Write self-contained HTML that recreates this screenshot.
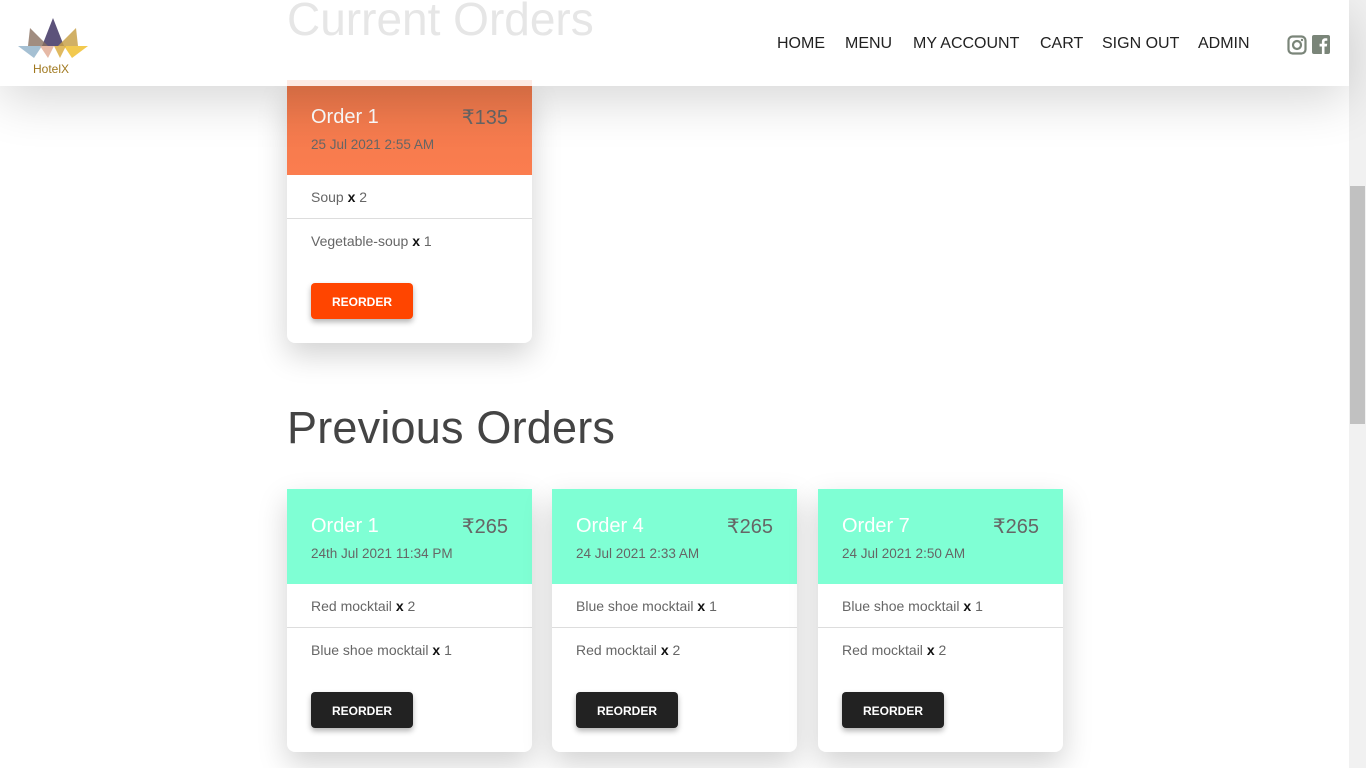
<!DOCTYPE html>
<html><head><meta charset="utf-8"><style>
*{box-sizing:border-box;margin:0;padding:0}
body{width:1366px;height:768px;overflow:hidden;background:#fff;font-family:"Liberation Sans",sans-serif;position:relative}
.hdr{position:absolute;left:0;top:0;width:1349px;height:86px;background:#fff;box-shadow:0 14px 50px rgba(0,0,0,.16);z-index:5}
.nav{position:absolute;top:35px;font-size:16px;color:#222}
.cur{position:absolute;left:287px;top:-8px;font-size:46px;font-weight:300;color:#e6e6e6;z-index:6}
.prev{position:absolute;left:287px;top:402px;font-size:45px;color:#444;font-weight:300;letter-spacing:.2px}
.card{position:absolute;width:245px;background:#fff;border-radius:0 0 8px 8px;box-shadow:0 12px 30px rgba(0,0,0,.18)}
.h{height:95px;padding:26px 24px 0;position:relative;color:#fff}
.h .t{font-size:20px}
.h .p{position:absolute;right:24px;top:25px;font-size:20px;color:#666}
.h .d{font-size:13.5px;color:#666;margin-top:8px}
.it{height:43px;padding:14px 24px;font-size:14px;color:#666}
.it b{color:#111;font-weight:bold}
.sep{border-top:1px solid #ddd}
.btn{position:absolute;left:24px;width:102px;height:36px;border-radius:4px;color:#fff;font-size:12px;font-weight:bold;text-align:center;line-height:38px;box-shadow:0 3px 6px rgba(0,0,0,.3)}
.sb{position:absolute;left:1349px;top:0;width:17px;height:768px;background:#f1f1f1}
.th{position:absolute;left:1350px;top:186px;width:15px;height:238px;background:#c1c1c1}
</style></head><body>
<div class="hdr">
<svg style="position:absolute;left:18px;top:16px" width="70" height="44" viewBox="0 0 70 44">
<polygon points="35,2 24,30 46,30" fill="#4a3f6b" opacity=".9"/>
<polygon points="12,12 10,30 30,30" fill="#8a7060" opacity=".8"/>
<polygon points="58,12 40,30 60,30" fill="#c9a24a" opacity=".85"/>
<polygon points="0,30 24,30 16,42" fill="#8fb0c8" opacity=".8"/>
<polygon points="46,30 70,30 54,42" fill="#f0c030" opacity=".85"/>
<polygon points="22,30 36,30 30,42" fill="#e0a890" opacity=".8"/>
<polygon points="36,30 48,30 42,42" fill="#d8a838" opacity=".8"/>
</svg>
<div style="position:absolute;left:33px;top:62px;font-size:12px;color:#a0781e">HotelX</div>
<div class="nav" style="left:777px">HOME</div>
<div class="nav" style="left:845px">MENU</div>
<div class="nav" style="left:913px">MY ACCOUNT</div>
<div class="nav" style="left:1040px">CART</div>
<div class="nav" style="left:1102px">SIGN OUT</div>
<div class="nav" style="left:1198px">ADMIN</div>
<svg style="position:absolute;left:1287px;top:35px" width="20" height="20" viewBox="0 0 20 20"><rect x="1.5" y="1.5" width="17" height="17" rx="4" fill="none" stroke="#7a8579" stroke-width="2.2"/><circle cx="10" cy="10" r="4" fill="none" stroke="#7a8579" stroke-width="2.2"/><circle cx="15" cy="5" r="1.2" fill="#7a8579"/></svg>
<svg style="position:absolute;left:1312px;top:35px" width="18" height="19" viewBox="0 0 18 19"><rect width="18" height="19" rx="2" fill="#7a8579"/><path d="M12.5 19V11.5h2.3l.4-2.7h-2.7V7.1c0-.8.3-1.3 1.4-1.3h1.4V3.4c-.3 0-1.1-.1-2-.1-2 0-3.4 1.2-3.4 3.5v2H7.6v2.7h2.3V19z" fill="#fff"/></svg>
</div>
<div class="cur">Current Orders</div>
<div style="position:absolute;left:287px;top:80px;width:245px;height:6px;background:#fdeae4;z-index:6"></div>
<div class="card" style="left:287px;top:86px;height:257px">
<div class="h" style="height:89px;padding-top:20px;background:linear-gradient(#ee794c,#fb7d4f)"><div class="t">Order 1</div><div class="p" style="top:19px">₹135</div><div class="d">25 Jul 2021 2:55 AM</div></div>
<div class="it">Soup <b>x</b> 2</div>
<div class="it sep">Vegetable-soup <b>x</b> 1</div>
<div class="btn" style="top:197px;background:#ff4500">REORDER</div>
</div>
<div class="prev">Previous Orders</div>
<div class="card" style="left:287px;top:489px;height:263px">
<div class="h" style="background:#7fffd4"><div class="t">Order 1</div><div class="p">₹265</div><div class="d">24th Jul 2021 11:34 PM</div></div>
<div class="it">Red mocktail <b>x</b> 2</div>
<div class="it sep">Blue shoe mocktail <b>x</b> 1</div>
<div class="btn" style="top:203px;background:#222">REORDER</div>
</div>
<div class="card" style="left:552px;top:489px;height:263px">
<div class="h" style="background:#7fffd4"><div class="t">Order 4</div><div class="p">₹265</div><div class="d">24 Jul 2021 2:33 AM</div></div>
<div class="it">Blue shoe mocktail <b>x</b> 1</div>
<div class="it sep">Red mocktail <b>x</b> 2</div>
<div class="btn" style="top:203px;background:#222">REORDER</div>
</div>
<div class="card" style="left:818px;top:489px;height:263px">
<div class="h" style="background:#7fffd4"><div class="t">Order 7</div><div class="p">₹265</div><div class="d">24 Jul 2021 2:50 AM</div></div>
<div class="it">Blue shoe mocktail <b>x</b> 1</div>
<div class="it sep">Red mocktail <b>x</b> 2</div>
<div class="btn" style="top:203px;background:#222">REORDER</div>
</div>
<div class="sb"></div><div class="th"></div>
</body></html>
